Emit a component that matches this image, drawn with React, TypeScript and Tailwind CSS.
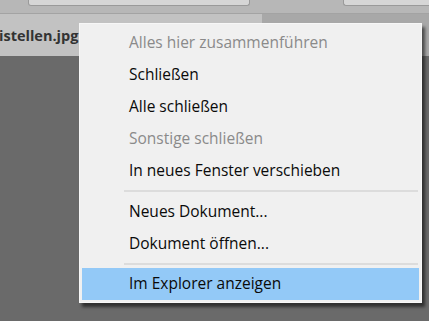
import React from "react";

type Item = { label: string; disabled?: boolean; active?: boolean } | "sep";

const items: Item[] = [
  { label: "Alles hier zusammenführen", disabled: true },
  { label: "Schließen" },
  { label: "Alle schließen" },
  { label: "Sonstige schließen", disabled: true },
  { label: "In neues Fenster verschieben" },
  "sep",
  { label: "Neues Dokument..." },
  { label: "Dokument öffnen..." },
  "sep",
  { label: "Im Explorer anzeigen", active: true },
];

export default function App() {
  return (
    <div
      className="relative w-[429px] h-[321px] overflow-hidden bg-[#6a6a6a] flex flex-col"
      style={{ fontFamily: '"Open Sans", "Noto Sans", sans-serif' }}
    >
      {/* top strip */}
      <div className="h-[14px] bg-[#b7b7b7] border-b border-[#a3a3a3] flex items-start">
        <div className="ml-[28px] w-[222px] h-[6px] bg-[#d6d6d6] border border-t-0 border-[#9a9a9a] rounded-b-[3px]" />
        <div className="ml-[93px] flex-1 h-[6px] bg-[#d6d6d6] border border-t-0 border-r-0 border-[#9a9a9a] rounded-bl-[3px]" />
      </div>
      {/* tab row */}
      <div className="h-[42px] flex">
        <div className="w-[262px] bg-[#c2c2c2] flex items-center">
          <span className="text-[14.5px] font-bold text-[#333333] leading-none -ml-[1px] mt-[2px]">
            istellen.jpg
          </span>
        </div>
        <div className="flex-1 bg-[#a8a8a8]" />
      </div>
      <div className="flex-1" />

      {/* context menu */}
      <div className="absolute left-[79px] top-[23px] w-[343px] h-[280px] bg-[#f0f0f0] border border-[#f7f7f7] shadow-[3px_4px_3px_rgba(0,0,0,0.55)] px-[2px] pt-[3px] pb-[2px] flex flex-col">
        {items.map((it, i) =>
          it === "sep" ? (
            <div key={i} className="h-[9px] flex items-center pl-[42px] pr-[1px]">
              <div className="h-[2px] w-full bg-[#dcdcdc]" />
            </div>
          ) : (
            <div
              key={i}
              className={
                "h-[32px] shrink-0 flex items-center pl-[47px] text-[15.5px] leading-none " +
                (it.active ? "bg-[#93c9f7] " : "") +
                (it.disabled ? "text-[#8a8a8a]" : "text-[#0a0a0a]")
              }
            >
              {it.label}
            </div>
          )
        )}
      </div>
    </div>
  );
}
